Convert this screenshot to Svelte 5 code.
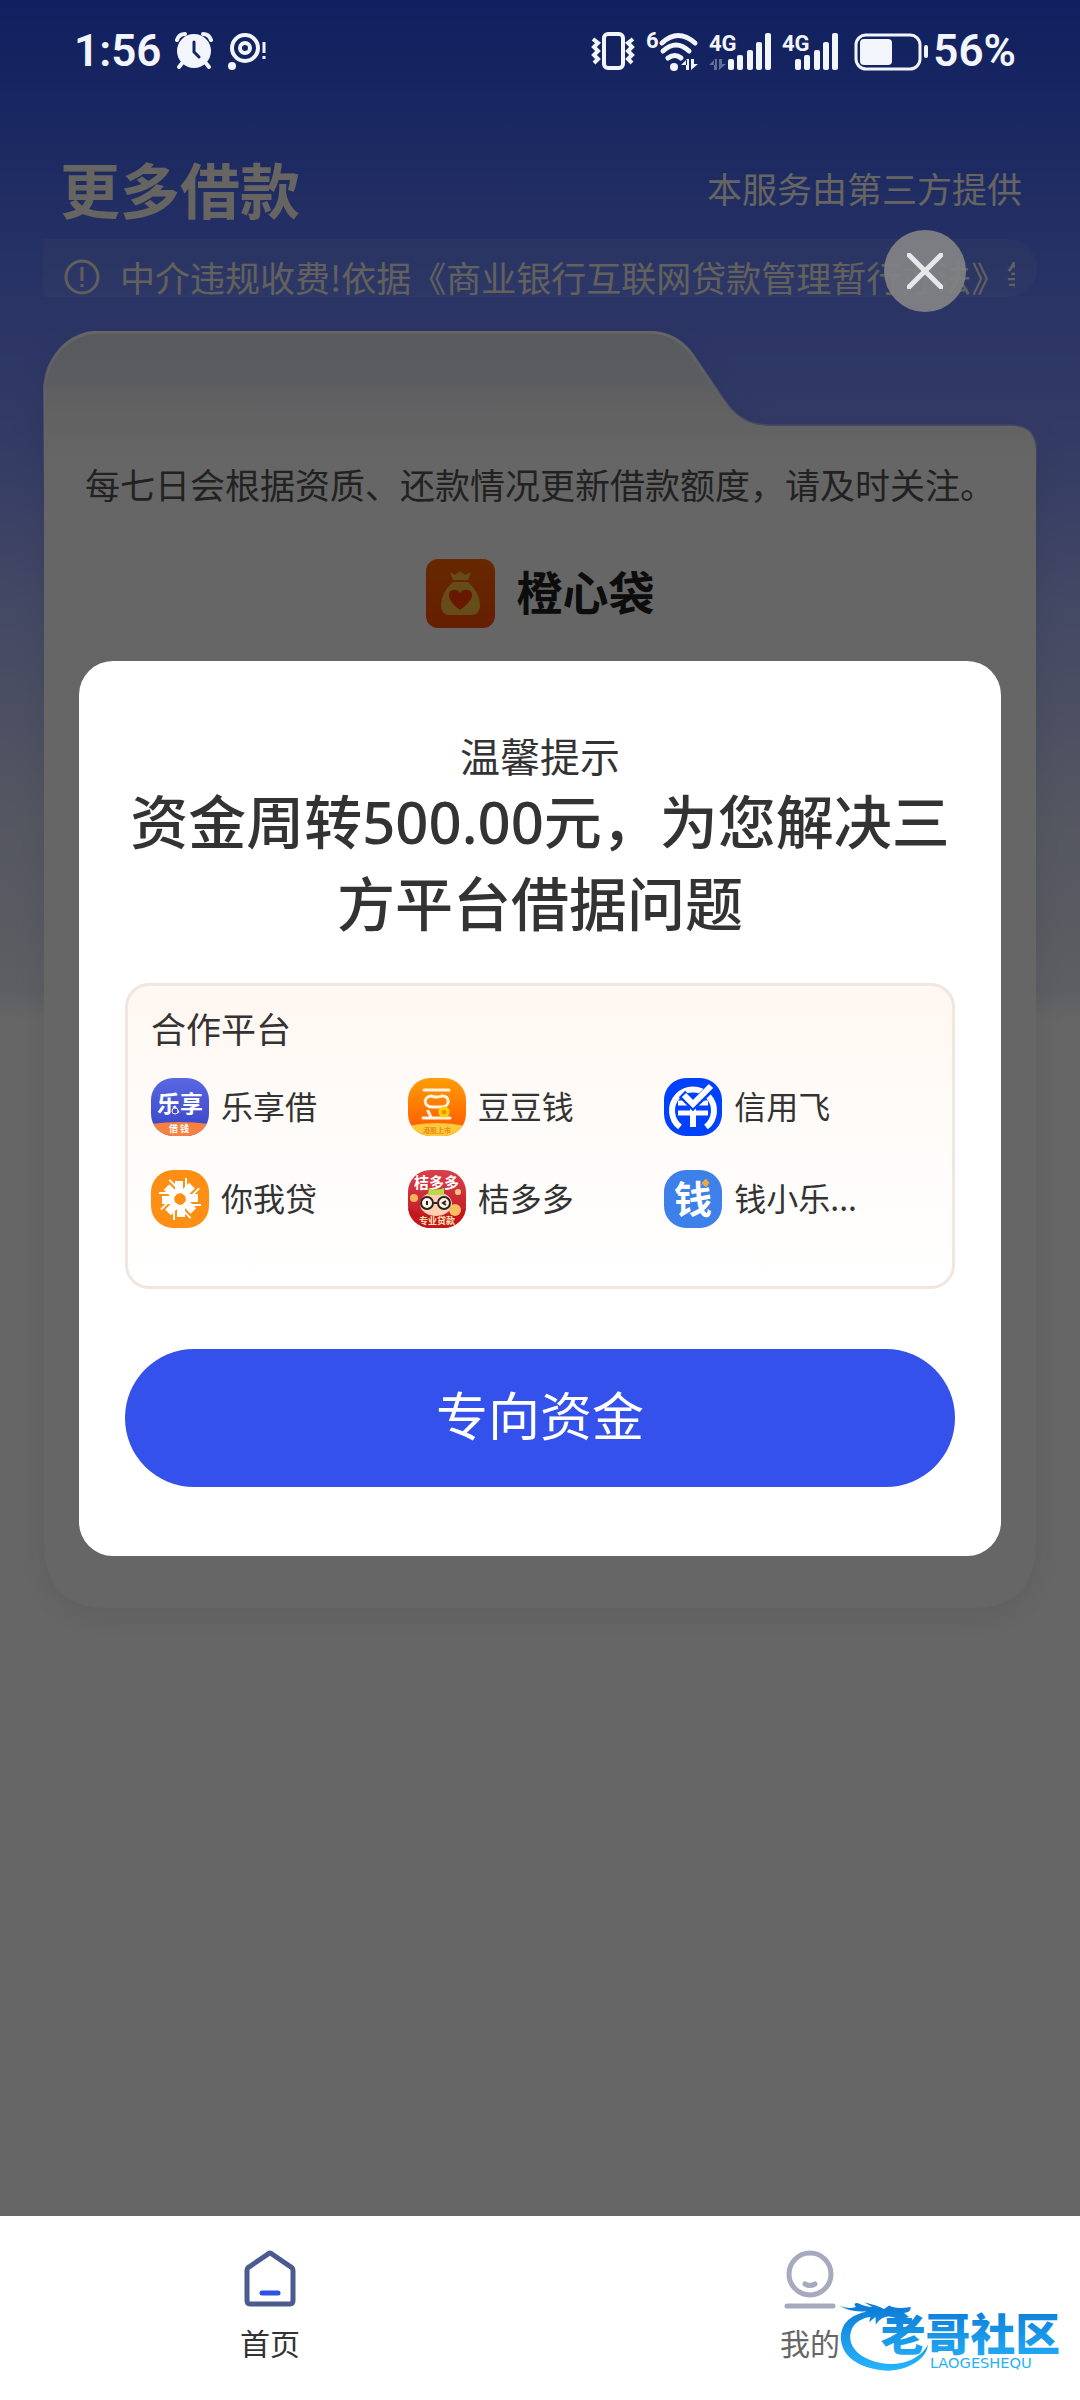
<script>
  const platforms = [
    { id: 'lexiang', name: '乐享借' },
    { id: 'doudou', name: '豆豆钱' },
    { id: 'xinyong', name: '信用飞' },
    { id: 'niwo', name: '你我贷' },
    { id: 'judd', name: '桔多多' },
    { id: 'qianxl', name: '钱小乐...' }
  ];
  const spokes = [0, 45, 90, 135, 180, 225, 270, 315];
  let open = $state(true);
</script>

{#snippet arrows(x, y)}
  <path transform="translate({x} {y})" d="M5 0v11h3V0zM0 6 6 0v6zM10 0v11l7-6h-4V0z" />
{/snippet}

{#snippet logo(id)}
  <svg class="logo" viewBox="0 0 58 58" aria-hidden="true">
    {#if id === 'lexiang'}
      <rect width="58" height="58" fill="url(#g-blue)" />
      <text x="6" y="34" font-size="23" font-weight="700" fill="#fff">乐享</text>
      <circle cx="24" cy="33" r="3" fill="#3f4ccc" stroke="#fff" stroke-width="1" />
      <path d="M0 46Q29 42 58 46V58H0z" fill="#f9813f" />
      <text x="18" y="54" font-size="9" font-weight="700" fill="#fff">借 钱</text>
    {:else if id === 'doudou'}
      <rect width="58" height="58" fill="url(#g-orange)" />
      <g fill="none" stroke="#fff4e4" stroke-width="3" stroke-linecap="round">
        <path d="M16 12H41" />
        <path d="M23 18C15 19 15 29 25 29H33C43 29 42 17 34 18C30 19 28 20 23 18z" />
        <path d="M20 33 23 39M15 40H42" />
      </g>
      <circle cx="36" cy="34" r="4" fill="#ff8a00" stroke="#ffd500" stroke-width="3" />
      <path d="M0 48Q29 42 58 48V58H0z" fill="#ffc93a" />
      <text x="15" y="55" font-size="7" font-weight="700" fill="#e98a1c">港股上市</text>
    {:else if id === 'xinyong'}
      <rect width="58" height="58" fill="#0042fb" />
      <g fill="none" stroke="#fff">
        <path d="M16 49A21 21 0 1 1 42 49" stroke-width="6" />
        <path d="M14 25H44M14 35H44" stroke-width="5" />
        <path d="M29 26V49" stroke-width="6" />
      </g>
      <path d="M18 16 29 27 49 8" fill="none" stroke="#0042fb" stroke-width="9" />
      <path d="M20 17 29 26 47 8" fill="none" stroke="#fff" stroke-width="6" />
    {:else if id === 'niwo'}
      <rect width="58" height="58" fill="#ff8f14" />
      {#each spokes as a (a)}
        <g transform="rotate({a} 29 29)">
          <path d="M24 24 24 11 32 11 32 23z" fill="#fff" />
          <path d="M35 21 35 8" stroke="#fff" stroke-width="2" />
        </g>
      {/each}
      <path d="M29 23 31 27 35 29 31 31 29 35 27 31 23 29 27 27z" fill="#ff8f14" />
    {:else if id === 'judd'}
      <rect width="58" height="58" fill="url(#g-red)" />
      <circle cx="6" cy="28" r="4" fill="#f7b45c" />
      <circle cx="50" cy="22" r="3" fill="#ffc98a" />
      <ellipse cx="28" cy="34" rx="16" ry="12" fill="#ffcfb0" />
      <path d="M0 38Q14 47 29 46Q46 46 58 38V58H0z" fill="#c4161c" />
      <circle cx="47" cy="40" r="6" fill="#f9bd62" />
      <text x="6" y="18" font-size="15" font-weight="700" fill="#fff">桔多多</text>
      <path d="M20 25 21 18Q29 21 36 18L36 25z" fill="#b6dc4e" />
      <g fill="#fff3e6" stroke="#2c2024" stroke-width="2">
        <circle cx="19" cy="33" r="6" />
        <circle cx="36" cy="33" r="6" />
        <path d="M26 33H29M19 31V35M38 31 35 33 38 35" fill="none" />
      </g>
      <text x="11" y="54" font-size="9" font-weight="700" fill="#ffe7b5">专业贷款</text>
    {:else}
      <rect width="58" height="58" fill="#3d80e9" />
      <text x="10" y="43" font-size="38" font-weight="700" fill="#fff">钱</text>
      <path d="M42 8 46 13 42 18 37 13z" fill="#e9a93c" stroke="#3d80e9" stroke-width="1" />
    {/if}
  </svg>
{/snippet}

<svg class="defs" aria-hidden="true">
  <defs>
    <linearGradient id="g-blue" x2="0" y2="1"><stop stop-color="#5a67e2" /><stop offset="1" stop-color="#3743c6" /></linearGradient>
    <linearGradient id="g-orange" x2="0" y2="1"><stop stop-color="#ff9d05" /><stop offset="1" stop-color="#ff5500" /></linearGradient>
    <linearGradient id="g-red" x2="0" y2="1"><stop stop-color="#d8404c" /><stop offset="1" stop-color="#c0141a" /></linearGradient>
    <linearGradient id="g-bag" x2="0" y2="1"><stop stop-color="#ff6600" /><stop offset="1" stop-color="#ff4d00" /></linearGradient>
    <linearGradient id="g-mark" gradientUnits="userSpaceOnUse" x1="0" y1="300" x2="0" y2="510"><stop stop-color="#0a76d2" /><stop offset="1" stop-color="#26b4fb" /></linearGradient>
  </defs>
</svg>

<div class="page">
  <div class="screen">
    <header class="status">
      <div class="group left">
        <span class="clock">1:56</span>
        <svg width="38" height="38" viewBox="0 0 38 38" aria-label="闹钟">
          <path d="M8 30 4 35M30 30 34 35" stroke="#f3f5fd" stroke-width="4" stroke-linecap="round" />
          <path d="M2 8Q4 2 10 2M36 8Q34 2 28 2" stroke="#f3f5fd" stroke-width="4" stroke-linecap="round" fill="none" />
          <circle cx="19" cy="19" r="17" fill="#f3f5fd" />
          <path d="M19 10V20L24 25" stroke="#16245f" stroke-width="3" stroke-linecap="round" fill="none" />
        </svg>
        <svg width="42" height="38" viewBox="0 0 42 38" aria-label="提醒">
          <g fill="none" stroke="#f3f5fd" stroke-width="4"><circle cx="18" cy="16" r="13" /><circle cx="18" cy="16" r="5" /></g>
          <circle cx="5" cy="34" r="4" fill="#f3f5fd" />
          <path d="M37 10V21M37 24V27" stroke="#f3f5fd" stroke-width="3" />
        </svg>
      </div>
      <div class="group right">
        <svg width="44" height="40" viewBox="592 31 44 40" aria-label="振动">
          <rect x="605" y="34" width="19" height="34" rx="4" fill="none" stroke="#f3f5fd" stroke-width="4" />
          <path d="M594 39 599 43 595 47 599 51 595 55 599 59 595 63M634 39 629 43 633 47 629 51 633 55 629 59 633 63" fill="none" stroke="#f3f5fd" stroke-width="4" />
        </svg>
        <svg class="wifi" width="54" height="42" viewBox="647 29 54 42" aria-label="无线网络">
          <text class="tiny" x="647" y="47">6</text>
          <g fill="none" stroke="#f3f5fd" stroke-width="5" stroke-linecap="round">
            <path d="M663 42Q679 27 696 42" /><path d="M664 50Q677 38 690 50" /><path d="M669 57Q676 52 682 57" />
          </g>
          <circle cx="675" cy="66" r="4" fill="#f3f5fd" />
          <g fill="#f3f5fd">{@render arrows(682, 58)}</g>
        </svg>
        <svg class="sim" width="64" height="42" viewBox="709 29 64 42" aria-label="4G 信号">
          <text class="tiny" x="709" y="50">4G</text>
          <g fill="#f3f5fd" opacity="0.35">{@render arrows(709, 58)}</g>
          <g fill="#f3f5fd">
            <rect x="728" y="58" width="6" height="11" rx="2" /><rect x="737" y="54" width="6" height="15" rx="2" />
            <rect x="747" y="49" width="6" height="20" rx="2" /><rect x="756" y="41" width="6" height="28" rx="2" /><rect x="765" y="32" width="6" height="37" rx="2" />
          </g>
        </svg>
        <svg class="sim" width="58" height="42" viewBox="783 29 58 42" aria-label="4G 信号">
          <text class="tiny" x="783" y="50">4G</text>
          <g fill="#f3f5fd">
            <rect x="796" y="58" width="6" height="11" rx="2" /><rect x="805" y="54" width="6" height="15" rx="2" />
            <rect x="815" y="49" width="6" height="20" rx="2" /><rect x="824" y="41" width="6" height="28" rx="2" /><rect x="833" y="32" width="6" height="37" rx="2" />
          </g>
        </svg>
        <svg class="battery" width="76" height="42" viewBox="854 29 76 42" aria-label="电量">
          <rect x="857" y="34" width="64" height="34" rx="10" fill="none" stroke="#f3f5fd" stroke-width="3" />
          <rect x="861" y="38" width="32" height="26" rx="4" fill="#f3f5fd" />
          <rect x="925" y="44" width="4" height="13" rx="2" fill="#f3f5fd" />
        </svg>
        <span class="clock">56%</span>
      </div>
    </header>

    <div class="heading">
      <h1>更多借款</h1>
      <span>本服务由第三方提供</span>
    </div>

    <div class="notice">
      <svg width="36" height="36" viewBox="0 0 36 36" aria-hidden="true">
        <circle cx="18" cy="18" r="16" fill="none" stroke="#efeee8" stroke-width="3" />
        <path d="M18 8V22M18 25V28" stroke="#efeee8" stroke-width="3" />
      </svg>
      <p>中介违规收费!依据《商业银行互联网贷款管理暂行办法》等</p>
    </div>

    <main class="card">
      <svg class="shape" viewBox="0 0 994 1277" preserveAspectRatio="none" aria-hidden="true">
        <defs>
          <linearGradient id="g-card" gradientUnits="userSpaceOnUse" x1="0" y1="0" x2="0" y2="130">
            <stop stop-color="#dfe1ea" /><stop offset="0.42" stop-color="#e2e8f2" />
            <stop offset="0.46" stop-color="#eeeef3" /><stop offset="1" stop-color="#fff" />
          </linearGradient>
          <linearGradient id="g-edge" gradientUnits="userSpaceOnUse" x1="0" y1="0" x2="0" y2="160">
            <stop stop-color="#fff" /><stop offset="1" stop-color="#fff" stop-opacity="0" />
          </linearGradient>
        </defs>
        <path
          d="M1 64C1 28 24 1 58 1H603C628 1 642 12 653 29L679 67C691 85 704 95 728 95H968Q993 95 993 121V1211Q993 1277 928 1277H66Q1 1277 1 1211z"
          fill="url(#g-card)" stroke="url(#g-edge)" stroke-width="3" />
      </svg>
      <p>每七日会根据资质、还款情况更新借款额度，请及时关注。</p>
      <div class="brand">
        <svg width="69" height="69" viewBox="0 0 69 69" aria-hidden="true">
          <rect width="69" height="69" rx="12" fill="url(#g-bag)" />
          <path d="M24 13 29 16 34 12 39 16 45 13 42 21H27z" fill="#ffbf3c" />
          <path d="M27 23H42Q54 34 54 46Q54 56 45 56H24Q15 56 15 46Q15 34 27 23z" fill="#ffbf3c" />
          <path d="M34 51C26 45 23 40 23 36C23 30 31 29 34 34C37 29 46 30 46 36C46 40 42 45 34 51z" fill="#ff3c00" />
        </svg>
        <strong>橙心袋</strong>
      </div>
    </main>

    {#if open}
      <div class="overlay">
        <button class="close" aria-label="关闭" onclick={() => (open = false)}>
          <svg width="36" height="36" viewBox="0 0 36 36" aria-hidden="true">
            <path d="M2 2 34 34M34 2 2 34" stroke="#e6e7ea" stroke-width="5" stroke-linecap="round" />
          </svg>
        </button>
        <section class="modal" role="dialog" aria-labelledby="tip">
          <p class="tip" id="tip">温馨提示</p>
          <h2>资金周转500.00元，为您解决三方平台借据问题</h2>
          <div class="partners">
            <h3>合作平台</h3>
            <ul>
              {#each platforms as p (p.id)}
                <li>{@render logo(p.id)}<span>{p.name}</span></li>
              {/each}
            </ul>
          </div>
          <button class="action">专向资金</button>
        </section>
      </div>
    {/if}
  </div>

  <nav>
    <a href="#home" class="active">
      <svg width="60" height="60" viewBox="0 0 60 60" aria-hidden="true">
        <path d="M7 22Q7 19 9 18L28 5Q30 3 32 5L51 18Q53 19 53 22V51Q53 55 50 55H10Q7 55 7 51z" fill="none" stroke="#4b5a8f" stroke-width="5" />
        <path d="M22 44H38" stroke="#2f50e0" stroke-width="5" stroke-linecap="round" />
      </svg>
      <span>首页</span>
    </a>
    <a href="#mine">
      <svg width="60" height="60" viewBox="0 0 60 60" aria-hidden="true">
        <g fill="none" stroke="#a6aabf" stroke-width="5" stroke-linecap="round">
          <circle cx="30" cy="25" r="21" /><path d="M25 35Q30 38 35 35M7 57H53" />
        </g>
      </svg>
      <span>我的</span>
    </a>
    <svg class="mark" viewBox="290 280 680 250" aria-label="老哥社区">
      <g fill="url(#g-mark)">
        <path d="M385 335C320 345 298 380 300 420C305 480 370 512 445 514C510 510 560 475 562 435C545 470 500 494 448 494C385 492 330 460 328 415C328 380 350 355 400 350z" />
        <path d="M295 318Q320 330 345 322Q335 310 350 310Q375 322 395 322L370 308Q410 318 430 328L445 318Q465 330 510 322Q512 338 490 340L505 352Q480 362 455 352Q425 345 405 375L404 352L385 368L390 345L360 352L375 335Q330 340 295 318z" />
        <text x="420" y="456" font-size="135" font-weight="900">老哥社区</text>
        <text class="latin" x="568" y="506" font-size="44">LAOGESHEQU</text>
      </g>
    </svg>
  </nav>
</div>

<style>
  :global(body) { margin: 0; }
  .page {
    min-height: 100vh;
    display: flex;
    flex-direction: column;
    background: #fff;
    font-family: 'Noto Sans CJK SC', 'Noto Sans', sans-serif;
    color: #333;
  }
  .page :is(h1, h2, h3, p, ul) { margin: 0; padding: 0; }
  .defs { position: absolute; width: 0; height: 0; }
  .screen {
    position: relative;
    flex: 1;
    padding-bottom: 48px;
    background: linear-gradient(#2850ee 0, #4b6cf6 165px, #6982fd 300px, #8094fc 440px, #a8b4fa 600px, #d0d5f2 800px, #e8ecf6 990px, #fff 1020px);
  }
  .status {
    position: relative;
    z-index: 2;
    height: 102px;
    padding: 0 64px 0 74px;
    display: flex;
    align-items: center;
    justify-content: space-between;
  }
  .group { display: flex; align-items: center; }
  .left { gap: 14px; }
  .wifi { margin-left: 11px; overflow: visible; }
  .sim { margin-left: 9px; overflow: visible; }
  .battery { margin: 0 4px 0 13px; }
  .clock { font: 600 44px/50px Roboto, sans-serif; color: #f3f5fd; }
  .tiny { font: 700 22px Roboto, sans-serif; fill: #f3f5fd; }
  .heading {
    margin-top: 46px;
    padding: 0 58px 0 60px;
    display: flex;
    align-items: center;
    justify-content: space-between;
    color: #fffcf2;
  }
  h1 { font-size: 60px; line-height: 80px; font-weight: 700; }
  .heading span { font-size: 35px; line-height: 50px; }
  .notice {
    margin: 11px 43px 0;
    height: 58px;
    box-sizing: border-box;
    padding: 18px 22px 0 21px;
    border-radius: 0 29px 29px 0;
    display: flex;
    align-items: center;
    gap: 20px;
    background: rgba(255, 255, 255, 0.08);
  }
  .notice svg { flex: none; }
  .notice p {
    flex: 1;
    font-size: 35px;
    line-height: 52px;
    white-space: nowrap;
    overflow: hidden;
    color: #f5f3ea;
  }
  .card {
    position: relative;
    margin: 34px 43px 0;
    min-height: 1277px;
    box-sizing: border-box;
    padding-top: 133px;
    text-align: center;
  }
  .shape {
    position: absolute;
    inset: 0;
    width: 100%;
    height: 100%;
    filter: drop-shadow(0 8px 16px rgba(0, 0, 0, 0.08));
  }
  .card p { position: relative; font-size: 35px; line-height: 40px; color: #555; }
  .brand {
    position: relative;
    margin-top: 55px;
    display: flex;
    align-items: flex-start;
    justify-content: center;
    gap: 22px;
  }
  .brand strong { font-size: 46px; line-height: 62px; color: #222; }
  .overlay {
    position: absolute;
    inset: 0;
    display: flex;
    flex-direction: column;
    padding: 230px 79px 0;
    background: rgba(0, 0, 0, 0.6);
  }
  button { border: 0; padding: 0; font-family: inherit; }
  .close {
    align-self: flex-end;
    width: 82px;
    height: 82px;
    margin-right: 35px;
    border-radius: 50%;
    display: grid;
    place-items: center;
    background: rgba(130, 131, 132, 0.92);
  }
  .modal {
    margin-top: 349px;
    padding: 68px 46px 69px;
    border-radius: 34px;
    background: #fff;
    text-align: center;
  }
  .tip { font-size: 40px; line-height: 52px; }
  h2 { font: 500 58px/82px 'Noto Sans', 'Noto Sans CJK SC', sans-serif; }
  .partners {
    margin-top: 38px;
    height: 306px;
    box-sizing: border-box;
    padding: 20px 31px 0 23px;
    border: 3px solid #f1e7e0;
    border-radius: 24px;
    background: linear-gradient(#fff7f1, #fffbf8 40%, #fff);
    text-align: left;
  }
  h3 { font-size: 35px; line-height: 44px; font-weight: 400; }
  .partners ul {
    margin-top: 28px;
    display: grid;
    grid-template-columns: repeat(3, 1fr);
    row-gap: 34px;
    list-style: none;
  }
  li { display: flex; align-items: flex-start; gap: 12px; font-size: 32px; line-height: 54px; white-space: nowrap; }
  .logo { flex: none; width: 58px; height: 58px; border-radius: 22px; }
  .action {
    display: block;
    width: 100%;
    height: 138px;
    padding-bottom: 8px;
    margin-top: 60px;
    border-radius: 69px;
    background: #3451eb;
    color: #fff;
    font-size: 52px;
    line-height: 76px;
  }
  nav {
    position: relative;
    height: 184px;
    display: grid;
    grid-template-columns: 1fr 1fr;
    background: #fff;
  }
  nav a {
    padding-top: 33px;
    display: flex;
    flex-direction: column;
    align-items: center;
    gap: 12px;
    font-size: 30px;
    line-height: 42px;
    color: #666;
    text-decoration: none;
  }
  nav a.active { color: #333; }
  .mark { position: absolute; right: 16px; bottom: 24px; width: 227px; height: 83px; }
  .latin { font-family: 'DejaVu Sans', sans-serif; font-weight: 400; }
</style>
